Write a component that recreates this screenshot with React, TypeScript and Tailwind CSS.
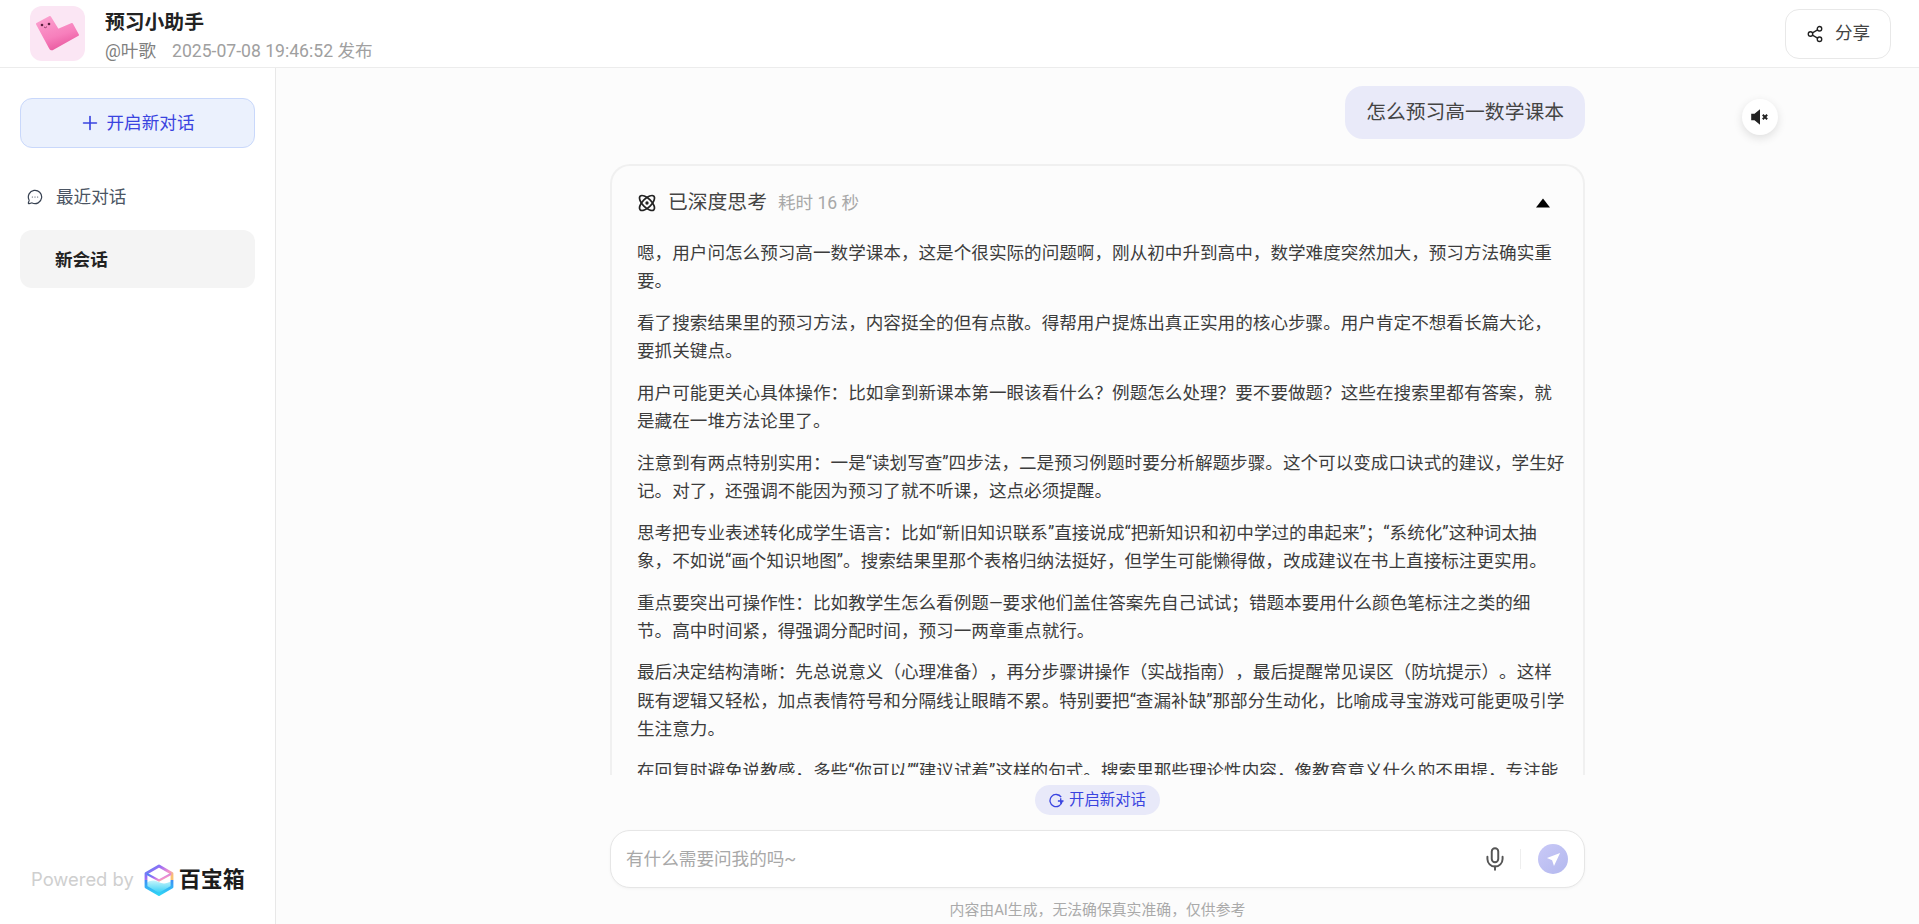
import { Atom, MessageCircleMore, Mic, Plus, Share2 } from "lucide-react";

const font = "font-['Roboto','Noto_Sans_CJK_SC',sans-serif] [text-spacing-trim:space-all]";

const thoughts = [
  "嗯，用户问怎么预习高一数学课本，这是个很实际的问题啊，刚从初中升到高中，数学难度突然加大，预习方法确实重要。",
  "看了搜索结果里的预习方法，内容挺全的但有点散。得帮用户提炼出真正实用的核心步骤。用户肯定不想看长篇大论，要抓关键点。",
  "用户可能更关心具体操作：比如拿到新课本第一眼该看什么？例题怎么处理？要不要做题？这些在搜索里都有答案，就是藏在一堆方法论里了。",
  "注意到有两点特别实用：一是“读划写查”四步法，二是预习例题时要分析解题步骤。这个可以变成口诀式的建议，学生好记。对了，还强调不能因为预习了就不听课，这点必须提醒。",
  "思考把专业表述转化成学生语言：比如“新旧知识联系”直接说成“把新知识和初中学过的串起来”；“系统化”这种词太抽象，不如说“画个知识地图”。搜索结果里那个表格归纳法挺好，但学生可能懒得做，改成建议在书上直接标注更实用。",
  "重点要突出可操作性：比如教学生怎么看例题—要求他们盖住答案先自己试试；错题本要用什么颜色笔标注之类的细节。高中时间紧，得强调分配时间，预习一两章重点就行。",
  "最后决定结构清晰：先总说意义（心理准备），再分步骤讲操作（实战指南），最后提醒常见误区（防坑提示）。这样既有逻辑又轻松，加点表情符号和分隔线让眼睛不累。特别要把“查漏补缺”那部分生动化，比喻成寻宝游戏可能更吸引学生注意力。",
  "在回复时避免说教感，多些“你可以”“建议试着”这样的句式。搜索里那些理论性内容，像教育意义什么的不用提，专注能",
];

function AppLogo() {
  return (
    <div className="h-[55px] w-[55px] rounded-xl bg-[#fbe6f4]">
      <svg viewBox="0 0 55 55" className="h-[55px] w-[55px]">
        <defs>
          <linearGradient id="lshape" x1="0.2" y1="0" x2="0.6" y2="1">
            <stop offset="0" stopColor="#fb9fce" />
            <stop offset="0.6" stopColor="#f77fbc" />
            <stop offset="1" stopColor="#e9589f" />
          </linearGradient>
        </defs>
        <path
          d="M7 18 20 11l8 13 14-6 6 11-25 14a2 2 0 0 1-3-1z"
          fill="url(#lshape)"
          stroke="url(#lshape)"
          strokeWidth="2"
          strokeLinejoin="round"
        />
        <circle cx="12" cy="19" r="1.3" fill="#5b2340" />
        <circle cx="19" cy="18" r="1.3" fill="#5b2340" />
        <path d="M14 21q1.500 1.500 3-.3" fill="none" stroke="#7a2c55" strokeWidth="0.8" />
      </svg>
    </div>
  );
}

function BaoxiangLogo() {
  return (
    <svg viewBox="0 0 32 32" className="h-[32px] w-[32px]">
      <defs>
        <linearGradient id="hexline" x1="0" y1="0" x2="1" y2="0.7">
          <stop offset="0" stopColor="#3d8df5" />
          <stop offset="0.4" stopColor="#9a6cf5" />
          <stop offset="0.75" stopColor="#f08fd0" />
          <stop offset="1" stopColor="#f9c073" />
        </linearGradient>
        <linearGradient id="hexedge" x1="0" y1="0" x2="0" y2="1">
          <stop offset="0" stopColor="#3d8df5" />
          <stop offset="1" stopColor="#2fd3f5" />
        </linearGradient>
        <linearGradient id="hexfill" x1="0" y1="0" x2="0" y2="1">
          <stop offset="0" stopColor="#c5f4fb" />
          <stop offset="1" stopColor="#27cdf5" />
        </linearGradient>
      </defs>
      <path d="M3.500 19c4-3 8-3 12-1s8 2 13-1v6L16 30 3.500 23z" fill="url(#hexfill)" />
      <path d="M3 16V9.500L16 2l13 7.500V16" fill="none" stroke="url(#hexline)" strokeWidth="2.800" strokeLinejoin="round" />
      <path d="M3 16v7l13 7.500L29 23v-7" fill="none" stroke="url(#hexedge)" strokeWidth="2.800" strokeLinejoin="round" />
      <path d="M4 10 16 16.500 28 10" fill="none" stroke="url(#hexline)" strokeWidth="2" />
    </svg>
  );
}

function Sidebar() {
  return (
    <aside className="flex w-[276px] shrink-0 flex-col border-r border-[#e8e8e8] bg-white pt-[30px] pr-[20px] pb-[28px] pl-5">
      <button className="flex h-[50px] w-[235px] items-center justify-center gap-[6px] rounded-xl border border-[#c9d8fb] bg-[#ebf1fd] pr-[2px] text-[17.6px] text-[#3a44e0]">
        <Plus className="h-[22px] w-[22px]" strokeWidth={1.8} />
        <span className="pt-[1px]">开启新对话</span>
      </button>
      <div className="mt-[36px] flex items-center gap-[13px] pl-[7px] text-[17.6px] text-[#4b5563]">
        <MessageCircleMore className="h-4 w-4 text-[#374151]" strokeWidth={1.8} />
        最近对话
      </div>
      <div className="mt-[20px] flex h-[58px] w-[235px] items-center rounded-xl bg-[#f4f4f4] pt-[1px] pl-[35px] text-[17.6px] font-bold text-[#222]">
        新会话
      </div>
      <div className="mt-auto flex items-center pl-[11px]">
        <span className="mr-[9px] font-['Inter',sans-serif] text-[18.400px] text-[#cfcfcf]">Powered by</span>
        <BaoxiangLogo />
        <span className="ml-[4px] text-[22px] font-bold text-[#1c1c1c]">百宝箱</span>
      </div>
    </aside>
  );
}

function ThinkingCard() {
  return (
    <div className="rounded-t-[20px] border-2 border-b-0 border-[#f0f0f0] pt-[17px] pr-[18px] pl-[25px]">
      <div className="flex h-[40px] items-center justify-between">
        <div className="flex items-center">
          <Atom className="h-[20px] w-[20px] text-[#222]" strokeWidth={2} />
          <span className="ml-[11px] text-[19.800px] text-[#444]">已深度思考</span>
          <span className="ml-[11px] text-[17.6px] text-[#a8a8a8]">耗时 16 秒</span>
        </div>
        <svg viewBox="0 0 14 10" className="mr-[15px] h-[10px] w-[14px]">
          <path d="M7 0.5 14 9.500H0z" fill="#000" />
        </svg>
      </div>
      <div className="mt-[16px] flex flex-col gap-[13.6px]">
        {thoughts.map((t, i) => (
          <p key={i} className="text-[17.6px] leading-[28.160px] text-[#3c3c3c]">
            {t}
          </p>
        ))}
      </div>
    </div>
  );
}

function InputBar() {
  return (
    <div className="flex h-[58px] items-center rounded-[20px] border border-[#e6e6e6] bg-white pr-4 pl-[15px] shadow-[0_1px_3px_rgba(0,0,0,0.04)]">
      <span className="flex-1 text-[17.6px] text-[#a8a8a8]">有什么需要问我的吗~</span>
      <Mic className="h-[26px] w-[26px] text-[#555]" strokeWidth={1.8} />
      <div className="mr-[17px] ml-[12px] h-[20px] w-px bg-[#eeeeee]" />
      <div className="flex h-[30px] w-[30px] items-center justify-center rounded-full bg-gradient-to-br from-[#c9c9f7] to-[#b3b8ee]">
        <svg viewBox="0 0 16 16" className="h-[15px] w-[15px]">
          <path d="M15 1 1 6.500l5.500 2.200L8.500 15z" fill="#fff" />
        </svg>
      </div>
    </div>
  );
}

export default function App() {
  return (
    <div className={`flex h-[924px] w-full flex-col overflow-hidden bg-white ${font}`}>
      <header className="flex h-[68px] shrink-0 items-center justify-between border-b border-[#ececec] pr-[28px] pl-[30px]">
        <div className="flex items-center">
          <AppLogo />
          <div className="ml-[20px] pt-[4px]">
            <div className="text-[19.800px] leading-[28px] font-bold text-[#222]">预习小助手</div>
            <div className="mt-[2px] flex text-[17.6px] leading-[24px] text-[#a0a0a0]">
              <span className="text-[#808080]">@叶歌</span>
              <span className="ml-[16px]">2025-07-08 19:46:52 发布</span>
            </div>
          </div>
        </div>
        <button className="flex h-[50px] w-[106px] items-center justify-center gap-[11px] rounded-[14px] border border-[#e8e8e8] text-[17.6px] text-[#444]">
          <Share2 className="h-[18px] w-[18px] text-[#222]" strokeWidth={1.8} />
          分享
        </button>
      </header>
      <div className="flex min-h-0 flex-1">
        <Sidebar />
        <main className="relative flex min-w-0 flex-1 flex-col items-center bg-[#fcfcfc]">
          <div className="flex min-h-0 w-[975px] flex-1 flex-col overflow-hidden pt-[18px]">
            <div className="self-end rounded-[18px] bg-[#e9eaf9] px-[21px] py-[11px] text-[19.800px] leading-[31px] text-[#444]">
              怎么预习高一数学课本
            </div>
            <div className="mt-[25px]">
              <ThinkingCard />
            </div>
          </div>
          <div className="w-[975px] shrink-0">
            <div className="mt-[10px] flex justify-center">
              <span className="flex h-[30px] items-center gap-[5px] rounded-full bg-[#e8e9f9] px-[14px] text-[15.400px] text-[#3a44e0]">
                <svg viewBox="0 0 16 16" className="h-[15px] w-[15px]" fill="none" stroke="#3a44e0" strokeWidth="1.400">
                  <path d="M13 4.500A6.500 6.500 0 1 0 14 9M9.500 8.500h6M12.500 5.500v6" />
                </svg>
                <span className="pt-[2px]">开启新对话</span>
              </span>
            </div>
            <div className="mt-[15px]">
              <InputBar />
            </div>
            <div className="h-[36px] pt-[11px] text-center text-[14.850px] leading-[22px] text-[#aaaaaa]">
              内容由AI生成，无法确保真实准确，仅供参考
            </div>
          </div>
          <div className="absolute top-[31px] right-[141px] flex h-[36px] w-[36px] items-center justify-center rounded-full bg-white shadow-[0_3px_10px_rgba(0,0,0,0.12)]">
            <svg viewBox="0 0 20 20" className="h-[22px] w-[22px]">
              <path d="M2 7h3l5-4v14l-5-4H2z" fill="#222" />
              <path d="m12.500 8 4 4m0-4-4 4" stroke="#222" strokeWidth="1.800" />
            </svg>
          </div>
        </main>
      </div>
    </div>
  );
}
